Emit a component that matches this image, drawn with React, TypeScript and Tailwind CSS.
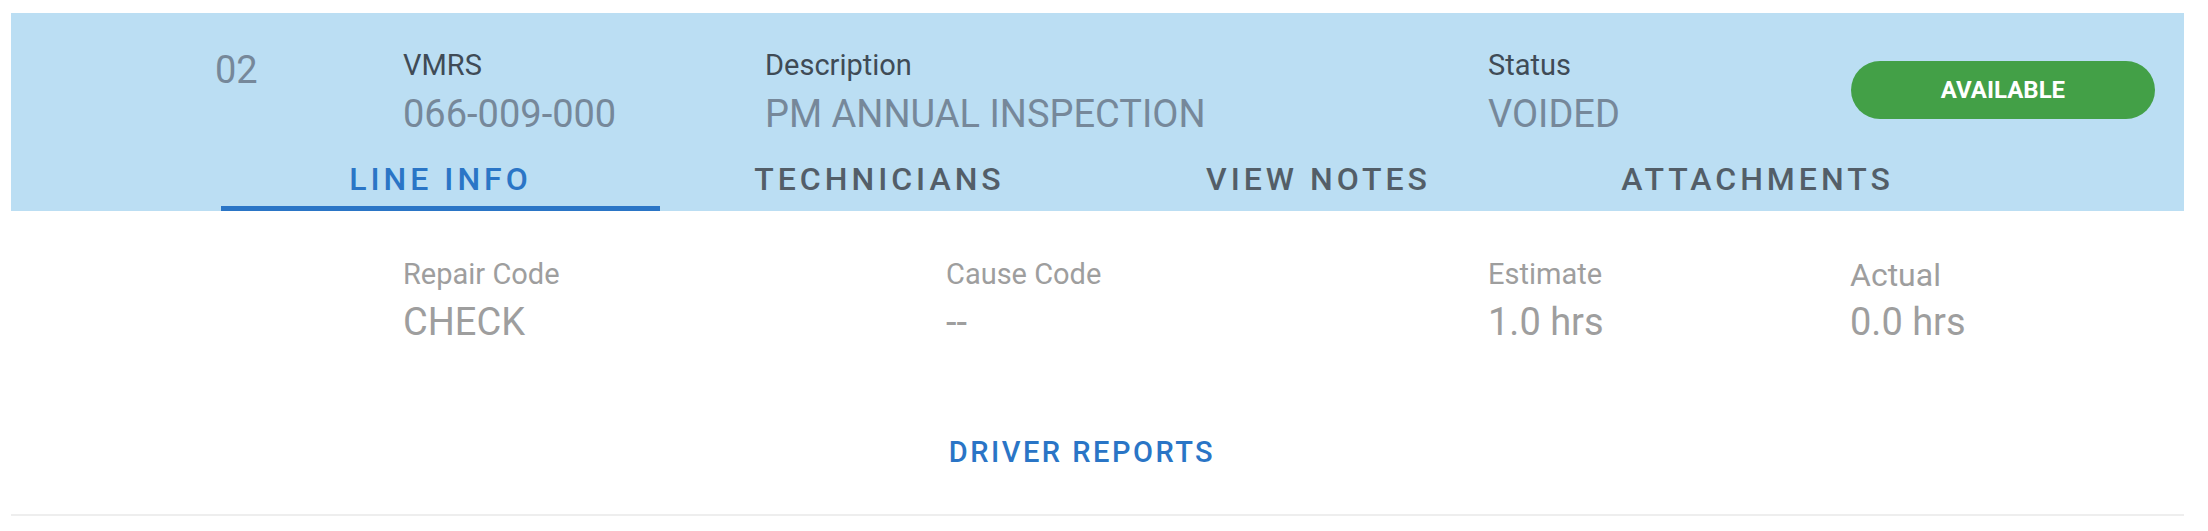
import React from 'react';

const tabs = ['LINE INFO', 'TECHNICIANS', 'VIEW NOTES', 'ATTACHMENTS'];

const headFields = [
  { label: 'VMRS', value: '066-009-000', width: 'w-[362px]' },
  { label: 'Description', value: 'PM ANNUAL INSPECTION', width: 'w-[723px]' },
  { label: 'Status', value: 'VOIDED', width: 'w-[363px]' },
];

const infoFields = [
  { label: 'Repair Code', value: 'CHECK', width: 'w-[543px]', big: false },
  { label: 'Cause Code', value: '--', width: 'w-[542px]', big: false },
  { label: 'Estimate', value: '1.0 hrs', width: 'w-[362px]', big: false },
  { label: 'Actual', value: '0.0 hrs', width: 'w-[300px]', big: true },
];

const App: React.FC = () => {
  return (
    <div className="min-h-screen bg-white pt-[13px] pl-[11px] pr-[24px] font-['Roboto',sans-serif]">
      {/* header row */}
      <div className="bg-[#bbdef3]">
        <div className="flex pt-[35px] pl-[204px]">
          <div className="w-[188px] text-[38px] leading-[44px] text-[#76889a]">02</div>
          {headFields.map((f) => (
            <div key={f.label} className={f.width}>
              <p className="text-[29px] leading-[34px] text-[#3f4b56]">{f.label}</p>
              <p className="mt-[10px] text-[38px] leading-[44px] text-[#76889a]">{f.value}</p>
            </div>
          ))}
          <div className="pt-[13px]">
            <button className="flex h-[58px] w-[304px] items-center justify-center rounded-full bg-[#43a047] text-[24px] font-bold text-white">
              AVAILABLE
            </button>
          </div>
        </div>

        <div className="mt-[15px] flex pl-[210px]">
          {tabs.map((t, i) => (
            <div
              key={t}
              className={
                i === 0
                  ? 'flex h-[60px] w-[439px] items-center justify-center border-b-[5px] border-[#2a75c6] text-[32px] font-medium tracking-[4px] text-[#2a75c6]'
                  : 'flex h-[60px] w-[439px] items-center justify-center border-b-[5px] border-transparent text-[32px] font-medium tracking-[4px] text-[#535e68]'
              }
            >
              {t}
            </div>
          ))}
        </div>
      </div>

      {/* line info */}
      <div className="flex pt-[46px] pl-[392px]">
        {infoFields.map((f) => (
          <div key={f.label} className={f.width}>
            <p
              className={
                f.big
                  ? 'pt-[1px] text-[32px] leading-[34px] text-[#9e9e9e]'
                  : 'text-[29px] leading-[34px] text-[#9e9e9e]'
              }
            >
              {f.label}
            </p>
            <p
              className={
                f.big
                  ? 'mt-[8px] text-[38px] leading-[44px] text-[#9e9e9e]'
                  : 'mt-[9px] text-[38px] leading-[44px] text-[#9e9e9e]'
              }
            >
              {f.value}
            </p>
          </div>
        ))}
      </div>

      <div className="mt-[91px] flex justify-center pr-[31px]">
        <span className="text-[29px] font-medium leading-[34px] tracking-[2.5px] text-[#2a75c6]">DRIVER REPORTS</span>
      </div>

      <div className="mt-[45px] h-[2px] bg-[#eeeeee]" />
    </div>
  );
};

export default App;
